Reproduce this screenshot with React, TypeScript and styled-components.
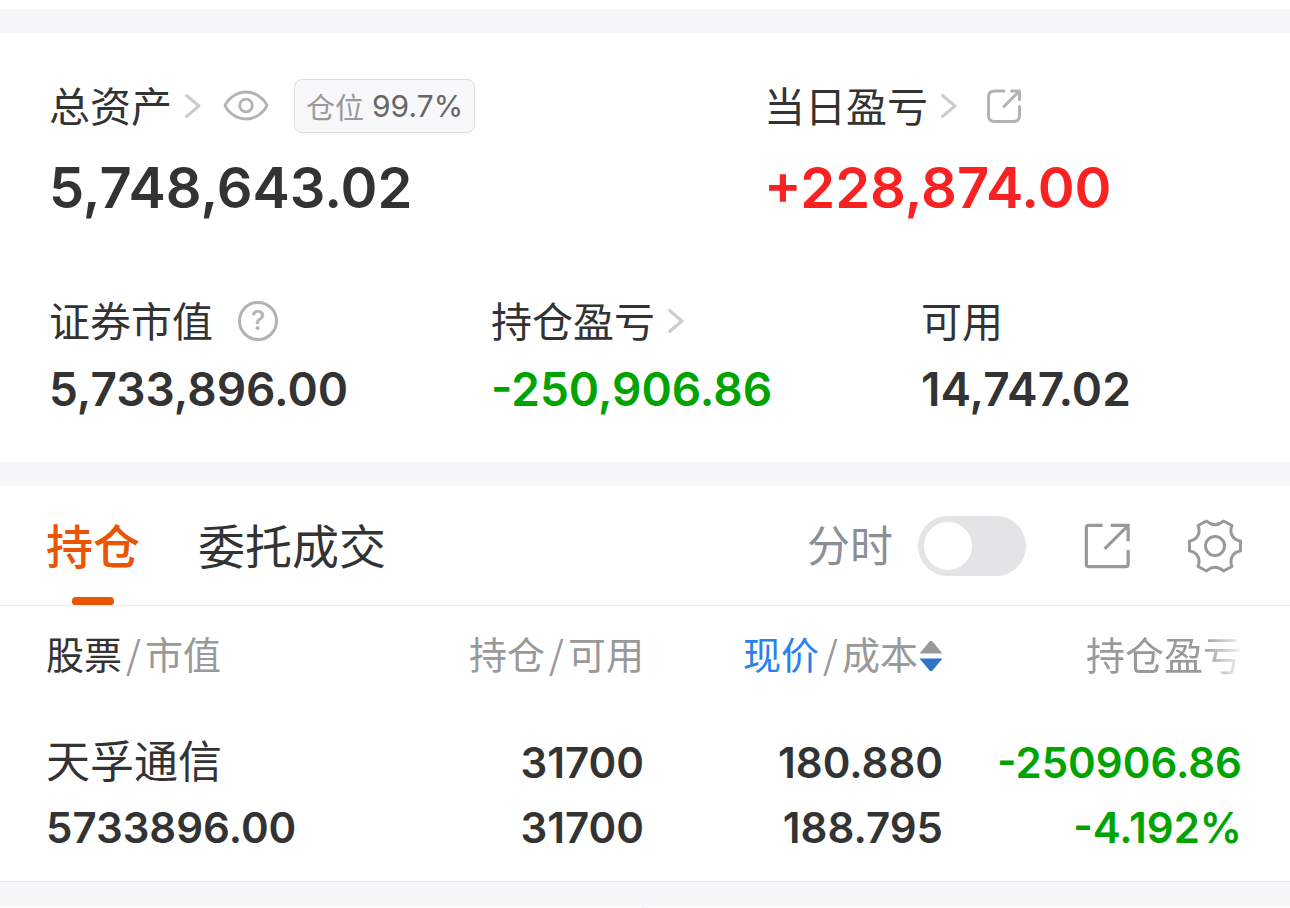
import React, { useState } from "react";
import styled, { createGlobalStyle } from "styled-components";

const GlobalStyle = createGlobalStyle`
  * { box-sizing: border-box; }
  body {
    margin: 0;
    background: #fff;
    color: #333;
    font-family: Inter, "Noto Sans CJK SC", sans-serif;
  }
  button {
    border: 0;
    padding: 0;
    background: none;
    color: inherit;
    font: inherit;
    cursor: pointer;
  }
  svg { display: block; flex: none; }
`;

type Tone = "plain" | "up" | "down";
const tones: Record<Tone, string> = { plain: "#333", up: "#f92222", down: "#00a300" };

const Page = styled.main`
  padding-top: 9px;
`;

const Band = styled.div`
  height: 24px;
  background: #f6f7f9;
`;

const Summary = styled.section`
  padding: 44px 48px 43px 49px;
`;

const TotalsRow = styled.div`
  display: grid;
  grid-template-columns: 715fr 478fr;
`;

const DetailRow = styled.div`
  display: grid;
  grid-template-columns: 442fr 430fr 321fr;
  margin-top: 74px;
`;

const LabelLine = styled.div<{ $height: number }>`
  display: flex;
  align-items: center;
  height: ${(p) => p.$height}px;
  font-size: 41px;
  white-space: nowrap;
`;

const LabelText = styled.span`
  padding-bottom: 5px;
`;

const LinkLabel = styled.button`
  display: flex;
  align-items: center;
  gap: 12px;
`;

const IconButton = styled.button<{ $left: number }>`
  display: flex;
  margin-left: ${(p) => p.$left}px;
`;

const HelpButton = styled.button`
  width: 40px;
  height: 40px;
  margin-left: 25px;
  border: 3px solid #b3b3b3;
  border-radius: 50%;
  color: #b3b3b3;
  font-size: 27px;
  font-weight: 500;
  line-height: 34px;
`;

const PositionTag = styled.span`
  display: flex;
  align-items: center;
  gap: 8px;
  height: 54px;
  margin-left: 25px;
  padding: 0 11px;
  border: 1px solid #ddd;
  border-radius: 8px;
  background: #f8f8fb;
  color: #999;
  font-size: 29px;
`;

const TagNumber = styled.span`
  color: #666;
  font-size: 30px;
`;

const Amount = styled.div<{ $tone: Tone; $large?: boolean }>`
  color: ${(p) => tones[p.$tone]};
  font-size: ${(p) => (p.$large ? 56 : 46)}px;
  font-weight: 600;
  line-height: ${(p) => (p.$large ? 72 : 60)}px;
  margin-top: ${(p) => (p.$large ? 17 : 15)}px;
`;

const TabBar = styled.div`
  display: flex;
  align-items: center;
  justify-content: space-between;
  height: 120px;
  padding: 0 47px 0 46px;
  border-bottom: 1px solid #ebebeb;
`;

const Tabs = styled.div`
  display: flex;
  align-self: stretch;
  gap: 58px;
`;

const Tab = styled.button<{ $active: boolean }>`
  position: relative;
  padding-bottom: 5px;
  color: ${(p) => (p.$active ? "#ea5504" : "#333")};
  font-size: 47px;
  font-weight: ${(p) => (p.$active ? 500 : 400)};

  &::after {
    content: "";
    display: ${(p) => (p.$active ? "block" : "none")};
    position: absolute;
    bottom: 0;
    left: 50%;
    width: 42px;
    height: 8px;
    margin-left: -21px;
    border-radius: 4px 4px 3px 3px;
    background: #ea5504;
  }
`;

const Tools = styled.div`
  display: flex;
  align-items: center;
`;

const ToggleLabel = styled.label`
  display: flex;
  align-items: center;
  gap: 25px;
  color: #8e8e96;
  font-size: 43px;
`;

const Toggle = styled.input`
  appearance: none;
  display: flex;
  width: 108px;
  height: 60px;
  margin: 0;
  padding: 6px;
  border-radius: 30px;
  background: #e4e4e6;

  &::before {
    content: "";
    width: 48px;
    height: 48px;
    border-radius: 50%;
    background: #fff;
  }
  &:checked { background: #ea5504; justify-content: flex-end; }
`;

const Holdings = styled.section`
  padding: 0 48px 0 46px;
  border-bottom: 1px solid #e8eaec;
`;

const Table = styled.table`
  width: 100%;
  table-layout: fixed;
  border-collapse: collapse;
`;

const HeadCell = styled.th`
  height: 99px;
  padding: 0;
  color: #999;
  font-size: 38px;
  font-weight: 400;
  white-space: nowrap;
`;

const HeadGroup = styled.div<{ $start?: boolean }>`
  display: flex;
  align-items: center;
  justify-content: ${(p) => (p.$start ? "flex-start" : "flex-end")};
`;

const HeadText = styled.span<{ $faded?: boolean }>`
  padding-bottom: 6px;
  font-size: ${(p) => (p.$faded ? 39 : 38)}px;
  mask-image: ${(p) => (p.$faded ? "linear-gradient(to right, #000 74%, rgba(0, 0, 0, 0.1))" : "none")};
`;

const Slash = styled.span`
  margin: 0 4px;
  font-family: "Noto Sans CJK SC", sans-serif;
`;

const Strong = styled.span<{ $blue?: boolean }>`
  color: ${(p) => (p.$blue ? "#2a80ee" : "#333")};
`;

const SortButton = styled.button`
  display: flex;
  align-items: center;
  gap: 1px;
`;

const Cell = styled.td<{ $tone?: Tone; $start?: boolean }>`
  padding: 25px 0 21px;
  color: ${(p) => tones[p.$tone ?? "plain"]};
  font-size: 42px;
  font-weight: 600;
  line-height: 65px;
  text-align: ${(p) => (p.$start ? "left" : "right")};
  white-space: nowrap;
`;

const CellLine = styled.div``;

const StockName = styled.div`
  font-size: 44px;
  font-weight: 400;
`;

const Footer = styled.div`
  display: flex;
  justify-content: center;
  height: 2px;

  &::before {
    content: "";
    width: 6px;
    background: #f6f7f9;
  }
`;

const Chevron = () => (
  <svg width="18" height="26" viewBox="0 0 18 26" fill="none" stroke="#ccc" strokeWidth="3" strokeLinecap="round" strokeLinejoin="round">
    <path d="M2.5 2.500 15 13 2.5 23.500" />
  </svg>
);

const EyeIcon = () => (
  <svg width="46" height="32" viewBox="0 0 46 32" fill="none" stroke="#b3b3b3" strokeWidth="2.8" strokeLinejoin="round">
    <path d="M2 15.500C4 10.500 12 2 23 2S42 10.500 44 15.500C42 20.500 34 29 23 29S4 20.500 2 15.500Z" />
    <circle cx="23" cy="15.500" r="6.300" />
  </svg>
);

const ShareIcon = () => (
  <svg width="34" height="34" viewBox="0 0 34 34" fill="none" stroke="#b3b3b3" strokeWidth="3" strokeLinecap="round">
    <path d="M17 2H7.500Q1.500 2 1.500 8V26.500Q1.500 32.500 7.500 32.500H26.500Q32.500 32.500 32.500 26.500V17.500" />
    <path d="M24.500 2H32.500V10.500M32 2.500 17 17.500" strokeLinejoin="round" />
  </svg>
);

const OpenIcon = () => (
  <svg width="46" height="46" viewBox="0 0 49 49" fill="none" stroke="#999" strokeWidth="3.400">
    <path d="M19.800 2.500H5Q2.500 2.500 2.500 5V44Q2.500 46.500 5 46.500H44.500Q47 46.500 47 44V28.800" />
    <path d="M28.500 2.500H47V19.500M46 3.500 22 27.500" />
  </svg>
);

const GearIcon = () => (
  <svg width="56" height="56" viewBox="0 0 56 56" fill="none" stroke="#999" strokeWidth="3" strokeLinejoin="round">
    <path d="M19.500 3Q28 10.500 36.500 3L45 7.500C42 14.500 45.500 22 53.500 23V33C45.500 34 42 41.500 45 48.500L36.500 53Q28 45.500 19.500 53L11 48.500C14 41.500 10.500 34 2.500 33V23C10.500 22 14 14.500 11 7.500Z" />
    <circle cx="28" cy="28" r="9.500" />
  </svg>
);

const SortIcon = () => (
  <svg width="24" height="32" viewBox="0 0 24 32">
    <path d="M10.500 1.500Q12 0 13.500 1.500L23.500 13.500H.5Z" fill="#999" />
    <path d="M10.500 30.500Q12 32 13.500 30.500L23.500 18.500H.5Z" fill="#2f74c7" />
  </svg>
);

export default function App() {
  const [tab, setTab] = useState("holdings");
  const [intraday, setIntraday] = useState(false);

  return (
    <Page>
      <GlobalStyle />
      <Band />
      <Summary>
        <TotalsRow>
          <div>
            <LabelLine $height={58}>
              <LinkLabel><LabelText>总资产</LabelText><Chevron /></LinkLabel>
              <IconButton $left={21} aria-label="隐藏金额"><EyeIcon /></IconButton>
              <PositionTag>仓位<TagNumber>99.7%</TagNumber></PositionTag>
            </LabelLine>
            <Amount $tone="plain" $large>5,748,643.02</Amount>
          </div>
          <div>
            <LabelLine $height={58}>
              <LinkLabel><LabelText>当日盈亏</LabelText><Chevron /></LinkLabel>
              <IconButton $left={29} aria-label="分享"><ShareIcon /></IconButton>
            </LabelLine>
            <Amount $tone="up" $large>+228,874.00</Amount>
          </div>
        </TotalsRow>
        <DetailRow>
          <div>
            <LabelLine $height={46}>
              <LabelText>证券市值</LabelText>
              <HelpButton aria-label="证券市值说明">?</HelpButton>
            </LabelLine>
            <Amount $tone="plain">5,733,896.00</Amount>
          </div>
          <div>
            <LabelLine $height={46}>
              <LinkLabel><LabelText>持仓盈亏</LabelText><Chevron /></LinkLabel>
            </LabelLine>
            <Amount $tone="down">-250,906.86</Amount>
          </div>
          <div>
            <LabelLine $height={46}><LabelText>可用</LabelText></LabelLine>
            <Amount $tone="plain">14,747.02</Amount>
          </div>
        </DetailRow>
      </Summary>
      <Band />
      <TabBar>
        <Tabs>
          <Tab $active={tab === "holdings"} onClick={() => setTab("holdings")}>持仓</Tab>
          <Tab $active={tab === "orders"} onClick={() => setTab("orders")}>委托成交</Tab>
        </Tabs>
        <Tools>
          <ToggleLabel>
            <LabelText>分时</LabelText>
            <Toggle type="checkbox" checked={intraday} onChange={(e) => setIntraday(e.target.checked)} />
          </ToggleLabel>
          <IconButton $left={58} aria-label="展开"><OpenIcon /></IconButton>
          <IconButton $left={57} aria-label="设置"><GearIcon /></IconButton>
        </Tools>
      </TabBar>
      <Holdings>
        <Table>
          <thead>
            <tr>
              <HeadCell>
                <HeadGroup $start><HeadText><Strong>股票</Strong><Slash>/</Slash>市值</HeadText></HeadGroup>
              </HeadCell>
              <HeadCell>
                <HeadGroup><HeadText>持仓<Slash>/</Slash>可用</HeadText></HeadGroup>
              </HeadCell>
              <HeadCell>
                <HeadGroup>
                  <SortButton>
                    <HeadText><Strong $blue>现价</Strong><Slash>/</Slash>成本</HeadText>
                    <SortIcon />
                  </SortButton>
                </HeadGroup>
              </HeadCell>
              <HeadCell>
                <HeadGroup><HeadText $faded>持仓盈亏</HeadText></HeadGroup>
              </HeadCell>
            </tr>
          </thead>
          <tbody>
            <tr>
              <Cell $start>
                <StockName>天孚通信</StockName>
                <CellLine>5733896.00</CellLine>
              </Cell>
              <Cell>
                <CellLine>31700</CellLine>
                <CellLine>31700</CellLine>
              </Cell>
              <Cell>
                <CellLine>180.880</CellLine>
                <CellLine>188.795</CellLine>
              </Cell>
              <Cell $tone="down">
                <CellLine>-250906.86</CellLine>
                <CellLine>-4.192%</CellLine>
              </Cell>
            </tr>
          </tbody>
        </Table>
      </Holdings>
      <Band />
      <Footer />
    </Page>
  );
}
